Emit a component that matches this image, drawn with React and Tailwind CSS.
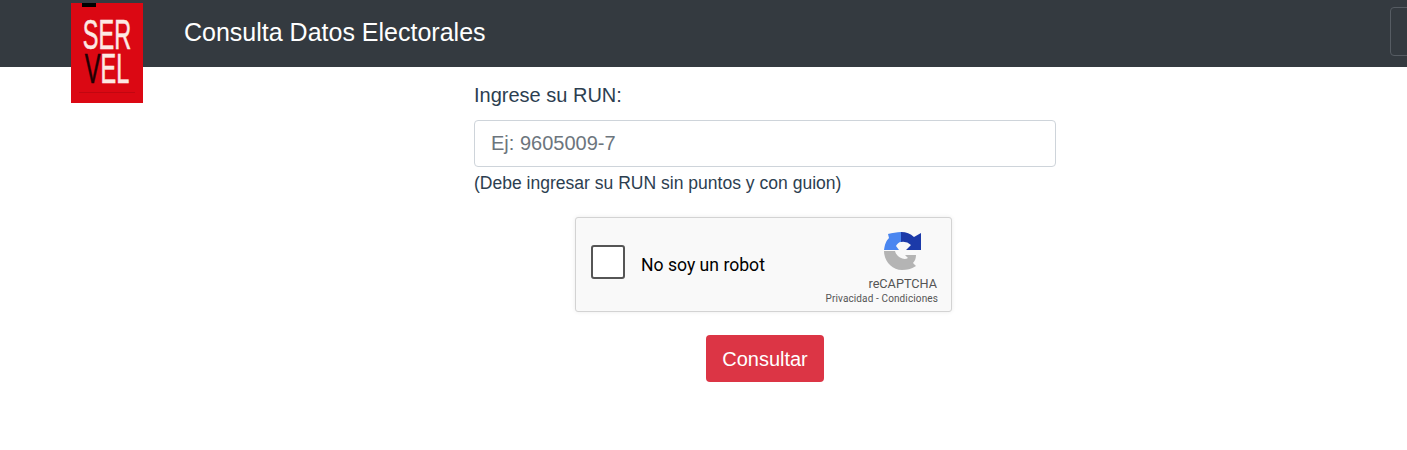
import React from "react";

function RecaptchaIcon() {
  return (
    <svg width="38" height="38" viewBox="0 0 38 38">
      <path d="M18 0 A19 19 0 0 1 31 5 L38 1 V18 H23 L28 13 A12 12 0 0 0 18 10 Z" fill="#1c3aa9" />
      <path d="M1 18 C2 12 3 9 6 6 L5 2 C9 1 14 0 18 0 V10 C16 10 14 12 13 14 L16 18 Z" fill="#4a86f0" />
      <path d="M1 19 H12 C13 24 20 29 25 26 L22 23 H33 C33 26 32 29 30 31 L33 34 C28 37 24 38 19 38 C9 38 1 29 1 19 Z" fill="#b4b4b4" />
    </svg>
  );
}

function Logo() {
  return (
    <div className="w-[72px] h-[100px] mt-[3px] shrink-0 bg-[#db0813] relative font-['Liberation_Sans',sans-serif] overflow-hidden">
      <div className="absolute left-[11px] top-0 w-[14px] h-[4px] bg-black" />
      <div className="absolute left-[-20px] right-[-20px] top-[9px] text-center text-[42px] leading-[45px] text-[#fde9e4] scale-x-[0.56] [-webkit-text-stroke:0.6px_currentColor]">
        SER
      </div>
      <div className="absolute left-[-20px] right-[-20px] top-[43px] text-center text-[42px] leading-[45px] text-[#fde9e4] scale-x-[0.56] [-webkit-text-stroke:0.6px_currentColor]">
        <span className="text-[#200003]">V</span>EL
      </div>
      <div className="absolute left-[8px] right-[8px] top-[89px] h-px bg-[#c20610]" />
    </div>
  );
}

export default function App() {
  return (
    <div className="min-h-[450px] bg-white font-['Liberation_Sans',sans-serif] overflow-hidden">
      <nav className="h-[67px] bg-[#343a40] flex items-start pl-[71px] relative">
        <Logo />
        <h1 className="ml-[41px] mt-[16px] text-[25px] leading-[33px] text-white font-normal">
          Consulta Datos Electorales
        </h1>
        <div className="absolute right-[-10px] top-[7px] w-[27px] h-[49px] rounded-[4px] border border-[#565c63]" />
      </nav>

      <main className="ml-[474px] w-[582px] flex flex-col">
        <label className="mt-[15px] text-[20px] leading-[27px] text-[#2c3e50]">Ingrese su RUN:</label>
        <input
          type="text"
          placeholder="Ej: 9605009-7"
          className="mt-[11px] h-[47px] w-full px-[16px] text-[20px] bg-white border border-[#ced4da] rounded-[4px] text-[#495057] placeholder:text-[#6c757d] outline-none"
        />
        <p className="mt-[4px] text-[17.55px] leading-[24px] text-[#2c3e50]">
          (Debe ingresar su RUN sin puntos y con guion)
        </p>

        <div className="mt-[22px] ml-[101px] w-[377px] h-[95px] bg-[#f9f9f9] border border-[#d3d3d3] rounded-[3px] shadow-[0_0_4px_rgba(0,0,0,0.08)] flex items-start relative font-['Roboto',sans-serif]">
          <div className="ml-[15px] mt-[27px] w-[34px] h-[34px] bg-white border-2 border-[#555555] rounded-[3px]" />
          <span className="ml-[16px] mt-[35px] text-[17.6px] leading-[24px] text-black">No soy un robot</span>
          <div className="ml-auto w-[130px] mr-[13px] mt-[14px] flex flex-col items-end text-[#555555]">
            <div className="mr-[17px]">
              <RecaptchaIcon />
            </div>
            <span className="mt-[6px] mr-[1px] text-[12.7px] leading-[16px]">reCAPTCHA</span>
            <span className="mt-0 text-[10px] leading-[14px] whitespace-nowrap tracking-[0.12px]">Privacidad - Condiciones</span>
          </div>
        </div>

        <button className="mt-[23px] mx-auto w-[118px] h-[47px] bg-[#dc3545] text-white text-[20px] rounded-[4px]">
          Consultar
        </button>
      </main>
    </div>
  );
}
